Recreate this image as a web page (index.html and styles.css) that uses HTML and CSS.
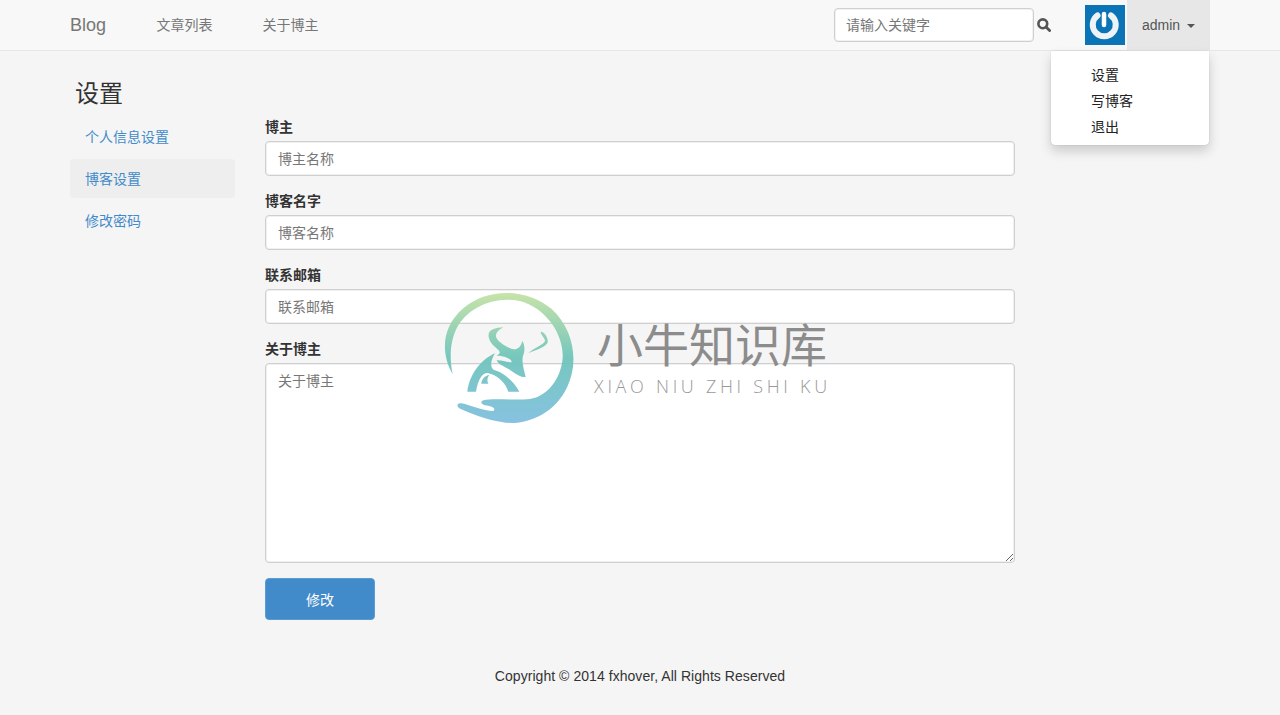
FILE: index.html
```html
<!DOCTYPE html>
<html lang="zh-CN">
<head>
<meta charset="utf-8">
<title>设置</title>
<link rel="stylesheet" href="styles.css">
</head>
<body>
<header class="navbar">
  <div class="nav-inner">
    <a class="brand">Blog</a>
    <nav class="nav-links"><a>文章列表</a><a>关于博主</a></nav>
    <form class="search">
      <input class="search-input" placeholder="请输入关键字">
      <svg class="search-icon" viewBox="0 0 14 14"><circle cx="5.8" cy="5.8" r="4.4" fill="none" stroke="#555" stroke-width="2.6"/><path d="M9 9L12.6 12.6" stroke="#555" stroke-width="2.8" stroke-linecap="round"/></svg>
    </form>
    <div class="avatar">
      <svg viewBox="0 0 40 40" width="40" height="40"><path d="M12.5 10.5A11.5 11.5 0 1 0 26 10.5" fill="none" stroke="#eef3f5" stroke-width="6" stroke-linecap="round"/><path d="M19 9V20" stroke="#fff" stroke-width="4.5" stroke-linecap="round"/></svg>
    </div>
    <a class="user">admin<span class="caret"></span></a>
  </div>
</header>
<ul class="menu">
  <li>设置</li>
  <li>写博客</li>
  <li>退出</li>
</ul>
<main class="content">
  <aside class="side">
    <h3 class="side-title">设置</h3>
    <ul class="pills">
      <li>个人信息设置</li>
      <li class="active">博客设置</li>
      <li>修改密码</li>
    </ul>
  </aside>
  <form class="settings">
    <div class="group"><label>博主</label><input class="field" placeholder="博主名称"></div>
    <div class="group"><label>博客名字</label><input class="field" placeholder="博客名称"></div>
    <div class="group"><label>联系邮箱</label><input class="field" placeholder="联系邮箱"></div>
    <div class="group"><label>关于博主</label><textarea class="field area" placeholder="关于博主"></textarea></div>
    <button class="submit" type="button">修改</button>
  </form>
</main>
<footer class="footer">Copyright © 2014 fxhover, All Rights Reserved</footer>
<div class="watermark">
  <svg class="wm-logo" viewBox="0 0 480 435" width="160" height="145">
    <defs><linearGradient id="wg" x1="0" y1="20" x2="0" y2="415" gradientUnits="userSpaceOnUse"><stop offset="0" stop-color="#c6e3a4"/><stop offset=".5" stop-color="#6fc5bb"/><stop offset="1" stop-color="#81bfe0"/></linearGradient></defs>
    <g fill="url(#wg)">
      <path d="M68 268C35 210 30 130 100 70C170 8 290 8 365 72C432 135 447 230 412 305C372 392 280 424 215 411C170 405 120 385 88 370C78 362 82 352 95 355C120 360 160 378 190 378C198 372 190 365 175 362C155 360 148 352 160 346C190 338 250 347 300 342C350 335 392 285 398 220C402 150 350 70 270 48C190 32 110 70 80 130C60 170 58 220 68 268Z"/>
      <path d="M220 127C195 128 172 135 176 155C180 175 190 180 205 195C215 205 205 208 200 212C225 212 245 222 245 232C230 232 215 225 200 226C205 240 225 245 240 255C250 262 262 270 268 272C275 276 282 277 287 275C282 255 274 230 279 212C286 195 284 180 277 167C272 190 258 197 240 190C220 180 195 165 198 150C200 140 210 132 220 127Z"/>
      <path d="M332 140C345 140 358 165 352 175C340 190 315 195 295 205C310 190 340 180 345 168C345 158 332 150 332 140Z"/>
      <path d="M112 320C118 270 150 225 195 205C183 225 178 245 192 255C215 260 250 285 268 320L235 320C228 295 205 272 180 266C160 258 145 280 138 320Z"/>
      <path d="M154 296C155 282 165 272 178 270C170 280 172 290 175 296Z"/>
    </g>
  </svg>
  <div class="wm-text">
    <div class="wm-cn">小牛知识库</div>
    <div class="wm-en">XIAO NIU ZHI SHI KU</div>
  </div>
</div>
</body>
</html>
```
FILE: styles.css
```css
* { box-sizing: border-box; }
html, body { margin: 0; height: 715px; overflow: hidden; }
body {
  position: relative;
  background: #f5f5f5;
  color: #333;
  font: 14px/20px "Liberation Sans", "Noto Sans CJK SC", sans-serif;
}
ul { list-style: none; margin: 0; padding: 0; }
.navbar { height: 51px; background: #f8f8f8; border-bottom: 1px solid #e7e7e7; }
.nav-inner { width: 1140px; margin-left: 70px; height: 50px; display: flex; align-items: center; }
.brand { font-size: 18px; color: #777; width: 36px; }
.nav-links { display: flex; gap: 50px; margin-left: 50.5px; color: #777; }
.search { display: flex; align-items: center; margin-left: auto; }
.search-input {
  width: 200px; height: 34px; padding: 6px 12px 6px 11px;
  font: inherit; background: #fff; border: 1px solid #cfcfcf; border-radius: 4px;
  box-shadow: inset 0 0 0 1px #f2f2f2;
}
.search-input::placeholder, .field::placeholder { color: #777; opacity: 1; }
.search-icon { width: 14px; height: 14px; margin-left: 3px; }
.avatar { width: 40px; height: 40px; margin-left: 34px; background: #0b74b6; }
.user {
  width: 83px; height: 50px; margin-left: 2px; padding-left: 15px;
  background: #e7e7e7; color: #555; line-height: 50px;
}
.caret {
  display: inline-block; margin-left: 7px; vertical-align: middle;
  border-top: 4px solid #555; border-left: 4px solid transparent; border-right: 4px solid transparent;
}
.menu {
  position: absolute; left: 1051px; top: 51px; width: 158px; height: 94px;
  padding-top: 11px; background: #fff; color: #222;
  border-radius: 0 0 4px 4px; box-shadow: 0 0 1px rgba(0,0,0,.3), 0 6px 12px rgba(0,0,0,.175);
}
.menu li { height: 26px; line-height: 26px; padding-left: 40px; }
.content { display: flex; gap: 30px; margin-left: 70px; }
.side { width: 165px; padding-top: 30px; }
.side-title { margin: 0 0 10px 5px; font-size: 24px; line-height: 26px; font-weight: 400; color: #333; }
.pills { display: flex; flex-direction: column; gap: 3px; color: #428bca; }
.pills li { height: 39px; line-height: 41px; padding-left: 15px; border-radius: 4px; }
.pills .active { background: #eee; }
.settings { width: 750px; padding-top: 66px; }
.group { margin-bottom: 15px; }
.group label { display: block; margin-bottom: 4px; font-size: 14px; font-weight: 700; color: #333; }
.field {
  display: block; width: 100%; height: 35px; padding: 6px 12px;
  font: inherit; color: #555; background: #fff;
  border: 1px solid #cfcfcf; border-radius: 4px;
  box-shadow: inset 0 0 0 1px #f0f0f0;
}
.area { height: 200px; padding-top: 7px; }
.submit {
  display: block; width: 110px; height: 42px; padding: 1px 0 0;
  font: inherit; color: #fff; background: #428bca;
  border: 1px solid #5a9bd3; border-radius: 4px;
}
.footer { position: absolute; left: 0; right: 0; top: 666px; text-align: center; color: #333; letter-spacing: .05px; }
.watermark { position: absolute; left: 430px; top: 285px; display: flex; pointer-events: none; }
.wm-logo { display: block; opacity: .95; }
.wm-text { margin: 33px 0 0 7px; color: #8c8c8c; }
.wm-cn { font-size: 46px; line-height: 57px; white-space: nowrap; }
.wm-en {
  margin: 0 0 0 -3px; font: 300 18px/22px "Open Sans", sans-serif;
  letter-spacing: 3.7px; white-space: nowrap; color: #999;
}
```
